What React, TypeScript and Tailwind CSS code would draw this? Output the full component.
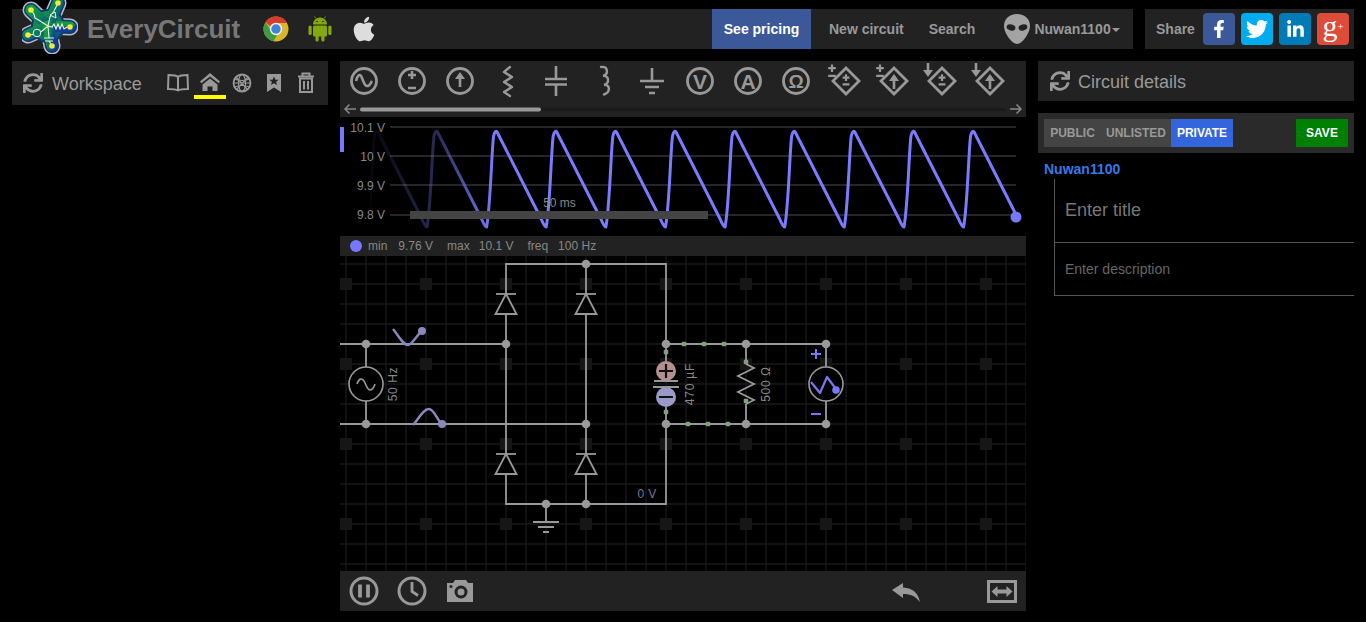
import React from "react";
import { FaFacebookF, FaTwitter, FaLinkedinIn, FaApple, FaSync } from "react-icons/fa";

const G = "#999999";

const Cell = ({ children }: { children: React.ReactNode }) => (
  <svg width="48" height="40" viewBox="0 0 48 40" fill="none" stroke={G} strokeWidth="2.5" className="block shrink-0">
    {children}
  </svg>
);
const Ring = () => <circle cx="24" cy="20" r="12.500" strokeWidth="2.800" />;
const Pm = ({ x, y, s = 1 }: { x: number; y: number; s?: number }) => (
  <path d={`M${x - 4 * s} ${y - 4 * s}h${8 * s}M${x} ${y - 8 * s}v${8 * s}M${x - 4 * s} ${y + 4 * s}h${8 * s}`} strokeWidth="2.200" />
);
const Up = ({ x, y }: { x: number; y: number }) => (
  <>
    <path d={`M${x} ${y + 8}V${y - 1}`} strokeWidth="2.600" />
    <path d={`M${x - 5} ${y}L${x} ${y - 7}L${x + 5} ${y}Z`} fill={G} stroke="none" />
  </>
);
const Down = ({ x, y }: { x: number; y: number }) => (
  <>
    <path d={`M${x} ${y - 7}V${y + 1}`} strokeWidth="2.600" />
    <path d={`M${x - 5} ${y}L${x} ${y + 7}L${x + 5} ${y}Z`} fill={G} stroke="none" />
  </>
);
const Diamond = () => <path d="M26 7L39 20L26 33L13 20Z" strokeWidth="2.800" />;
const Letter = ({ t, size = 21 }: { t: string; size?: number }) => (
  <text x="24" y={20 + size * 0.36} textAnchor="middle" fontSize={size} fontWeight="700" fill={G} stroke="none" fontFamily="Liberation Sans, sans-serif">
    {t}
  </text>
);

const tools: React.ReactNode[] = [
  <><Ring /><path d="M16 20c1.500-6 3.500-7 5-5s3 10 6 10 3.500-3 5-5" strokeWidth="2.600" /></>,
  <><Ring /><path d="M20 14h8M24 10v8M20 27h8" strokeWidth="2.600" /></>,
  <><Ring /><Up x={24} y={18} /></>,
  <path d="M26 6l-6 5 8 5-8 5 8 5-8 5 6 4" strokeWidth="2.400" strokeLinejoin="round" strokeLinecap="round" />,
  <path d="M24 5v13M13 18h22M13 23.500h22M24 23.500V35" strokeWidth="2.600" />,
  <path d="M21 6c7-1 8 7 2 9c6-1 7 7 1 9c6-1 7 7 0 9.500" strokeWidth="2.400" strokeLinecap="round" />,
  <path d="M24 7v13M12 20h24M17 26h14M21 32h6" strokeWidth="2.600" />,
  <><Ring /><Letter t="V" /></>,
  <><Ring /><Letter t="A" /></>,
  <><Ring /><Letter t="Ω" size={19} /></>,
  <><Diamond /><Pm x={26} y={20} s={0.85} /><Pm x={12} y={11} s={0.95} /></>,
  <><Diamond /><Up x={26} y={20} /><Pm x={12} y={11} s={0.95} /></>,
  <><Diamond /><Pm x={26} y={20} s={0.85} /><Down x={12} y={9} /></>,
  <><Diamond /><Up x={26} y={20} /><Down x={12} y={9} /></>,
];

const BookIcon = () => (
  <svg width="32" height="24" viewBox="0 0 32 24" fill="none" stroke={G} strokeWidth="2" className="block">
    <path d="M16 6c-2-2-6-2-9.500-2L6 18c4 0 7.500 0 10 1.500C18.500 18 22 18 26 18L25.500 4c-3.500 0-7.500 0-9.500 2ZM16 6v13" />
  </svg>
);
const HomeIcon = () => (
  <svg width="32" height="24" viewBox="0 0 32 24" className="block" fill={G}>
    <path d="M16 2L6 10.500l1.300 1.800L16 5.500l8.700 6.800L26 10.500Z" />
    <path d="M16 7.500L8.500 13.500V20h5v-4.500h5V20h5v-6.500Z" />
  </svg>
);
const GlobeIcon = () => (
  <svg width="32" height="24" viewBox="0 0 32 24" fill="none" stroke={G} strokeWidth="1.200" className="block">
    <circle cx="16" cy="12" r="8.500" strokeWidth="1.800" />
    <ellipse cx="16" cy="12" rx="3.500" ry="8.500" />
    <path d="M8.500 8c5 2 10 2 15 0M7.500 12h17M8.500 16c5-2 10-2 15 0M10 6l11 12M22 6L11 18" />
  </svg>
);
const MarkIcon = () => (
  <svg width="32" height="24" viewBox="0 0 32 24" className="block">
    <path d="M9 3h14v18l-7-4.500L9 21Z" fill={G} />
    <path d="M16 5.500l1.400 3.200h3.300l-2.600 2.100.9 3.300-3-1.900-3 1.900.9-3.300-2.600-2.100h3.300Z" fill="#222" />
  </svg>
);
const TrashIcon = () => (
  <svg width="32" height="24" viewBox="0 0 32 24" fill="none" stroke={G} className="block">
    <path d="M8 5.500h16M12.500 5V2.500h7V5" strokeWidth="2" />
    <path d="M10 7.500h12V21H10Z" strokeWidth="2" />
    <path d="M14 10v8.500M18 10v8.500" strokeWidth="2" />
  </svg>
);

const Logo = () => {
  const tips = [
    [48, 29],
    [36, 5],
    [9, 12],
    [6, 37],
    [30, 48],
  ];
  return (
    <svg width="56" height="56" viewBox="0 0 56 56" fill="none" className="block">
      <defs>
        <linearGradient id="lg" x1="0" y1="0" x2="1" y2="1">
          <stop offset="0" stopColor="#159a3e" />
          <stop offset="0.55" stopColor="#0c7a5e" />
          <stop offset="1" stopColor="#123e94" />
        </linearGradient>
      </defs>
      {tips.map((t, i) => (
        <path key={i} d={`M26 28L${t[0]} ${t[1]}`} stroke="#b4bccb" strokeWidth="17" strokeLinecap="round" />
      ))}
      <circle cx="26" cy="28" r="17" fill="#12366f" />
      {tips.map((t, i) => (
        <path key={i} d={`M26 28L${t[0]} ${t[1]}`} stroke="#12366f" strokeWidth="14" strokeLinecap="round" />
      ))}
      <circle cx="26" cy="28" r="15" fill="url(#lg)" />
      {tips.map((t, i) => (
        <path key={i} d={`M26 28L${t[0]} ${t[1]}`} stroke="url(#lg)" strokeWidth="11" strokeLinecap="round" />
      ))}
      <path d="M26 28L15 21l-2-1-1-4-3-4M26 28l2-9 4-6 4-8M26 28l4 1 2-3 2 5 2-5 2 5 2-5 2 5 3-2M26 28l-6 5-5 3-8 1M26 28l1 12M22 40h10M23 43h8M27 43l3 5" stroke="#eaf4ea" strokeWidth="1.100" />
      <circle cx="15" cy="35" r="3.800" stroke="#eaf4ea" strokeWidth="1" fill="#0c7a5e" />
      <path d="M28 17l5-3 1 6Z" stroke="#eaf4ea" strokeWidth="1" fill="#0c7a5e" />
      {tips.map((t, i) => (
        <circle key={i} cx={t[0]} cy={t[1]} r="2.800" fill="#f3ea3c" />
      ))}
    </svg>
  );
};

const Chrome = () => (
  <svg width="26" height="26" viewBox="0 0 26 26" className="block">
    <circle cx="13" cy="13" r="12.500" fill="#d8b628" />
    <path d="M13 .5A12.500 12.500 0 0 1 24 7H13a6 6 0 0 0-5.500 3.500L2.600 6A12.500 12.500 0 0 1 13 .5Z" fill="#d93a30" />
    <path d="M2.600 6l5 8.500a6 6 0 0 0 6.500 4.400L10.500 25.200A12.500 12.500 0 0 1 2.600 6Z" fill="#3d9c41" />
    <circle cx="13" cy="13" r="6.200" fill="#eee" />
    <circle cx="13" cy="13" r="4.700" fill="#3f83d8" />
  </svg>
);
const Android = () => (
  <svg width="24" height="26" viewBox="0 0 24 26" fill="#86a80f" className="block">
    <path d="M5 8.500a7 7 0 0 1 14 0Z" />
    <path d="M8 2.500L6.500 0.500M16 2.500l1.500-2" stroke="#86a80f" strokeWidth="0.800" />
    <rect x="5" y="9.500" width="14" height="11" rx="1.500" />
    <rect x="0.500" y="9.500" width="3.200" height="9.500" rx="1.600" />
    <rect x="20.300" y="9.500" width="3.200" height="9.500" rx="1.600" />
    <rect x="7.500" y="18" width="3.200" height="7.500" rx="1.600" />
    <rect x="13.300" y="18" width="3.200" height="7.500" rx="1.600" />
    <circle cx="9" cy="5.500" r="0.800" fill="#222" />
    <circle cx="15" cy="5.500" r="0.800" fill="#222" />
  </svg>
);
const Alien = () => (
  <svg width="26" height="30" viewBox="0 0 26 30" className="block">
    <path d="M13 0C5 0 0 5 0 12c0 7 8 18 13 18s13-11 13-18C26 5 21 0 13 0Z" fill="#a3a3a3" />
    <ellipse cx="7" cy="13.500" rx="4.500" ry="3" fill="#222" transform="rotate(15 7 13.500)" />
    <ellipse cx="19" cy="13.500" rx="4.500" ry="3" fill="#222" transform="rotate(-15 19 13.500)" />
  </svg>
);

const trace = () => {
  let d = "";
  const p = 59.62;
  for (let i = -1; i < 10; i++) {
    const t = 427 + i * p;
    const next = t + p;
    d += `${i === -1 ? "M" : "L"}${t.toFixed(1)} 227 C${(t + 4).toFixed(1)} 205 ${(t + 5).toFixed(1)} 150 ${(t + 7).toFixed(1)} 136 C${(t + 8).toFixed(1)} 131 ${(t + 10).toFixed(1)} 130 ${(t + 11).toFixed(1)} 133 L${(next - 5).toFixed(1)} 219 C${(next - 3).toFixed(1)} 224 ${(next - 1).toFixed(1)} 227 ${next.toFixed(1)} 227 `;
  }
  return d;
};

const Scope = () => (
  <svg width="686" height="119" viewBox="340 117 686 119" fill="none" className="block">
    <defs>
      <linearGradient id="fade" gradientUnits="userSpaceOnUse" x1="370" y1="0" x2="495" y2="0">
        <stop offset="0" stopColor="#7b7bff" stopOpacity="0.05" />
        <stop offset="0.55" stopColor="#7b7bff" stopOpacity="0.35" />
        <stop offset="1" stopColor="#7b7bff" stopOpacity="1" />
      </linearGradient>
      <clipPath id="sc">
        <rect x="370" y="117" width="646" height="119" />
      </clipPath>
    </defs>
    {[127, 156, 185, 215].map((y) => (
      <path key={y} d={`M390 ${y}H1016`} stroke="#333" strokeWidth="1.500" />
    ))}
    {[
      ["10.1 V", 132],
      ["10 V", 161],
      ["9.9 V", 190],
      ["9.8 V", 219],
    ].map(([t, y]) => (
      <text key={t} x="385" y={y} textAnchor="end" fontSize="12" fill="#888">
        {t}
      </text>
    ))}
    <rect x="340" y="127" width="4" height="25" fill="#7777ff" />
    <g clipPath="url(#sc)">
      <path d={trace()} stroke="url(#fade)" strokeWidth="3" strokeLinejoin="round" />
    </g>
    <rect x="410" y="211" width="298" height="8" fill="#444" />
    <text x="559.500" y="207" textAnchor="middle" fontSize="12" fill="#888">
      50 ms
    </text>
    <circle cx="1016" cy="217" r="5.500" fill="#7777ff" />
  </svg>
);

const Diode = ({ x, y }: { x: number; y: number }) => (
  <g>
    <path d={`M${x - 10} ${y}H${x + 10}`} stroke={G} strokeWidth="1.800" />
    <path d={`M${x} ${y}L${x + 10.500} ${y + 20}H${x - 10.500}Z`} fill="#000" stroke={G} strokeWidth="1.800" />
  </g>
);

const Circuit = () => {
  const vs = Array.from({ length: 35 }, (_, i) => 346 + i * 20);
  const hs = Array.from({ length: 16 }, (_, i) => 264 + i * 20);
  const sqx = [346, 426, 506, 586, 666, 746, 826, 906, 986];
  const sqy = [284, 364, 444, 524];
  const nodes = [
    [586, 264],
    [366, 344],
    [506, 344],
    [366, 424],
    [586, 424],
    [666, 344],
    [746, 344],
    [826, 344],
    [666, 424],
    [746, 424],
    [826, 424],
    [546, 504],
    [586, 504],
  ];
  const greens = [
    [684, 344],
    [704, 344],
    [724, 344],
    [688, 424],
    [708, 424],
    [728, 424],
    [666, 352],
    [666, 412],
    [746, 362],
    [746, 401],
  ];
  return (
    <svg width="686" height="315" viewBox="340 256 686 315" fill="none" className="block">
      {vs.map((x) => (
        <path key={x} d={`M${x} 256V571`} stroke="#1a1a1a" strokeWidth="1.300" />
      ))}
      {hs.map((y) => (
        <path key={y} d={`M340 ${y}H1026`} stroke="#1a1a1a" strokeWidth="1.300" />
      ))}
      {sqx.flatMap((x) =>
        sqy.map((y) => <rect key={`${x}-${y}`} x={x - 6} y={y - 6} width="12" height="12" fill="#161616" />),
      )}
      <path
        d="M666 361V264H506V504H666V407M586 264V504M340 344H506M340 424H586M366 344V367M366 401V424M666 344H826M666 424H826M746 344V364M746 404V424M826 344V367M826 401V424M546 504V522"
        stroke={G}
        strokeWidth="1.800"
      />
      <Diode x={506} y={294} />
      <Diode x={586} y={294} />
      <Diode x={506} y={454} />
      <Diode x={586} y={454} />
      <path d="M533 522H559M538 527H554M543 532H549" stroke={G} strokeWidth="1.800" />
      <circle cx="366" cy="384" r="17" fill="#000" stroke={G} strokeWidth="1.600" />
      <path d="M357 384c2-6 5-6 7-3s3 9 6 9 4-3 5-6" stroke={G} strokeWidth="1.600" />
      <text transform="translate(397 384) rotate(-90)" textAnchor="middle" fontSize="12" fill="#888" letterSpacing="0.600">
        50 Hz
      </text>
      <circle cx="666" cy="371" r="10" fill="#b49090" />
      <circle cx="666" cy="397" r="10" fill="#9a9ac8" />
      <path d="M659 371H673M666 364V378M659 397H673" stroke="#111" strokeWidth="2.200" />
      <path d="M654 381H678M653 387H679" stroke={G} strokeWidth="1.800" />
      <text transform="translate(694 384) rotate(-90)" textAnchor="middle" fontSize="12" fill="#888" letterSpacing="0.800">
        470 µF
      </text>
      <path d="M746 364L754 368L738 376L754 384L738 392L754 400L746 404" stroke={G} strokeWidth="1.800" strokeLinejoin="miter" />
      <text transform="translate(770 384) rotate(-90)" textAnchor="middle" fontSize="12" fill="#888" letterSpacing="0.600">
        500 Ω
      </text>
      <circle cx="826" cy="384" r="17" fill="#000" stroke={G} strokeWidth="1.600" />
      <path d="M811 382L820 393L827 377L836 389" stroke="#7777ee" strokeWidth="2.200" strokeLinejoin="round" />
      <circle cx="836" cy="390" r="3.800" fill="#7777ff" />
      <path d="M811 354H821M816 349V359M811 414H821" stroke="#7777ff" strokeWidth="2" />
      <path d="M393 329C398 335 403 345 408 345C412 345 416 336 422 331" stroke="#8888bb" strokeWidth="2.400" />
      <circle cx="422" cy="331" r="4" fill="#8888bb" />
      <path d="M413 425C418 420 423 409 429 409C434 409 437 420 442 424" stroke="#8888bb" strokeWidth="2.400" />
      <circle cx="442" cy="424" r="4" fill="#8888bb" />
      {nodes.map(([x, y]) => (
        <circle key={`${x}-${y}`} cx={x} cy={y} r="4.300" fill={G} />
      ))}
      {greens.map(([x, y]) => (
        <rect key={`g${x}-${y}`} x={x - 2.300} y={y - 2.300} width="4.600" height="4.600" rx="1" fill="#7f9f7f" />
      ))}
      <text x="647" y="498" textAnchor="middle" fontSize="12" fill="#777799" letterSpacing="0.400">
        0 V
      </text>
    </svg>
  );
};

const Arrow = ({ flip }: { flip?: boolean }) => (
  <svg width="14" height="12" viewBox="0 0 14 12" fill="none" stroke="#888888" strokeWidth="1.500" className={flip ? "block shrink-0 -scale-x-100" : "block shrink-0"}>
    <path d="M13 6H2M6.500 1.500L2 6l4.500 4.500" />
  </svg>
);

export default function App() {
  return (
    <div className="h-[622px] w-[1366px] overflow-hidden bg-black px-3 pt-[9px] font-['Liberation_Sans',Arial,sans-serif]">
      <div className="flex h-10 gap-3">
        <div className="flex w-[1121px] items-center bg-[#222222]">
          <div className="-mt-[7px] ml-[10px] h-14 w-14 shrink-0">
            <Logo />
          </div>
          <div className="ml-[9px] w-[153px] text-[26px] font-bold leading-none text-[#777777]">EveryCircuit</div>
          <div className="ml-[23px]"><Chrome /></div>
          <div className="ml-[19px]"><Android /></div>
          <div className="ml-[18px] text-[#dddddd]"><FaApple size={28} /></div>
          <div className="ml-[334px] flex h-10 w-[99px] items-center justify-center bg-[#3b5998] text-sm font-bold text-white">See pricing</div>
          <div className="ml-[18px] text-sm font-bold text-[#999999]">New circuit</div>
          <div className="ml-[25px] text-sm font-bold text-[#999999]">Search</div>
          <div className="ml-[29px]"><Alien /></div>
          <div className="ml-1 text-sm font-bold text-[#999999]">Nuwan1100</div>
          <div className="ml-[1px] mt-[2px] h-0 w-0 border-x-4 border-t-4 border-x-transparent border-t-[#999999]" />
        </div>
        <div className="flex w-[209px] items-center bg-[#222222] pl-[11px]">
          <div className="w-[47px] text-sm font-bold text-[#999999]">Share</div>
          <div className="flex gap-[6px]">
            <div className="flex h-8 w-8 items-center justify-center rounded-sm bg-[#3b5998] text-white"><FaFacebookF size={18} /></div>
            <div className="flex h-8 w-8 items-center justify-center rounded-sm bg-[#00aced] text-white"><FaTwitter size={22} /></div>
            <div className="flex h-8 w-8 items-center justify-center rounded-sm bg-[#007bb6] text-white"><FaLinkedinIn size={19} /></div>
            <div className="flex h-8 w-8 items-start justify-center rounded-sm bg-[#dd4b39] font-['Liberation_Serif',serif] text-white">
              <span className="text-[30px] leading-[26px]">g</span>
              <span className="mt-[6px] text-[11px] leading-[14px]">+</span>
            </div>
          </div>
        </div>
      </div>

      <div className="mt-3 flex gap-3">
        <div className="w-[316px]">
          <div className="flex h-11 items-center bg-[#222222] pl-[11px]">
            <FaSync size={20} color="#999999" />
            <div className="ml-[9px] pt-[2px] text-lg leading-none text-[#999999]">Workspace</div>
            <div className="ml-5 flex">
              <div className="flex h-11 w-8 items-center justify-center pb-[1px]"><BookIcon /></div>
              <div className="flex h-11 w-8 flex-col items-center">
                <div className="flex h-[34px] w-8 items-end justify-center"><HomeIcon /></div>
                <div className="h-1 w-8 bg-[#ffff00]" />
              </div>
              <div className="flex h-11 w-8 items-center justify-center"><GlobeIcon /></div>
              <div className="flex h-11 w-8 items-center justify-center"><MarkIcon /></div>
              <div className="flex h-11 w-8 items-center justify-center"><TrashIcon /></div>
            </div>
          </div>
        </div>

        <div className="w-[686px]">
          <div className="h-14 bg-[#222222]">
            <div className="flex h-10">
              {tools.map((t, i) => (
                <Cell key={i}>{t}</Cell>
              ))}
            </div>
            <div className="flex h-4 items-center px-[3px]">
              <Arrow />
              <div className="ml-[3px] mr-[3px] h-[3px] flex-1 bg-[#1a1a1a]">
                <div className="h-1 w-[181px] -translate-y-[0.5px] rounded-full bg-[#999999]" />
              </div>
              <Arrow flip />
            </div>
          </div>
          <Scope />
          <div className="flex h-5 items-center bg-[#222222] pl-[10px] text-xs text-[#888888]">
            <span className="h-3 w-3 rounded-full bg-[#7777ff]" />
            <span className="ml-[6px]">min</span>
            <span className="ml-[11px]">9.76 V</span>
            <span className="ml-[14px]">max</span>
            <span className="ml-[9px]">10.1 V</span>
            <span className="ml-[14px]">freq</span>
            <span className="ml-[10px]">100 Hz</span>
          </div>
          <Circuit />
          <div className="flex h-10 justify-between bg-[#222222]">
            <div className="flex">
              <Cell><circle cx="24" cy="20" r="13" strokeWidth="3" /><path d="M20 13.500v13M28 13.500v13" strokeWidth="3.800" /></Cell>
              <Cell><circle cx="24" cy="20" r="13" strokeWidth="3" /><path d="M24 11v9.500l6 4" strokeWidth="2.800" /></Cell>
              <Cell><path d="M11 12h6l2-3h11l2 3h5v19H11Z" fill={G} stroke="none" /><circle cx="25" cy="21" r="6.500" fill="#222" stroke="none" /><circle cx="25" cy="21" r="3.500" fill={G} stroke="none" /><circle cx="15" cy="15.500" r="1.500" fill="#222" stroke="none" /></Cell>
            </div>
            <div className="flex gap-12">
              <Cell><path d="M10 19L21 12V16.500C31 17 36 22 38 31C33 25 29 23 21 23V27Z" fill={G} stroke="none" /></Cell>
              <Cell><rect x="10.500" y="10.500" width="27" height="20" strokeWidth="3" /><path d="M13.500 20.500l6-5.500v3.500h9V15l6 5.500-6 5.500v-3.500h-9V26Z" fill={G} stroke="none" /></Cell>
            </div>
          </div>
        </div>

        <div className="w-[316px]">
          <div className="flex h-10 items-center bg-[#222222] pl-3">
            <FaSync size={20} color="#999999" />
            <div className="ml-2 pt-[2px] text-lg leading-none text-[#999999]">Circuit details</div>
          </div>
          <div className="mt-3 flex h-10 items-center justify-between bg-[#2a2a2a] px-[6px]">
            <div className="flex h-7 items-center text-xs font-bold text-[#999999]">
              <div className="flex h-7 w-[57px] items-center justify-center bg-[#444444]">PUBLIC</div>
              <div className="flex h-7 w-[70px] items-center justify-center bg-[#444444]">UNLISTED</div>
              <div className="flex h-7 w-[62px] items-center justify-center bg-[#3366dd] text-white">PRIVATE</div>
            </div>
            <div className="flex h-7 w-[52px] items-center justify-center bg-[#008000] text-xs font-bold text-white">SAVE</div>
          </div>
          <div className="ml-[6px] mt-2 text-sm font-bold leading-4 text-[#3b78e7]">Nuwan1100</div>
          <div className="ml-4 mt-[2px] border-l border-[#555555]">
            <div className="flex h-[64px] items-center border-b border-[#555555] pb-[2px] pl-[10px] text-lg text-[#777777]">Enter title</div>
            <div className="flex h-[53px] items-center border-b border-[#555555] pl-[10px] text-sm text-[#666666]">Enter description</div>
          </div>
        </div>
      </div>
    </div>
  );
}
